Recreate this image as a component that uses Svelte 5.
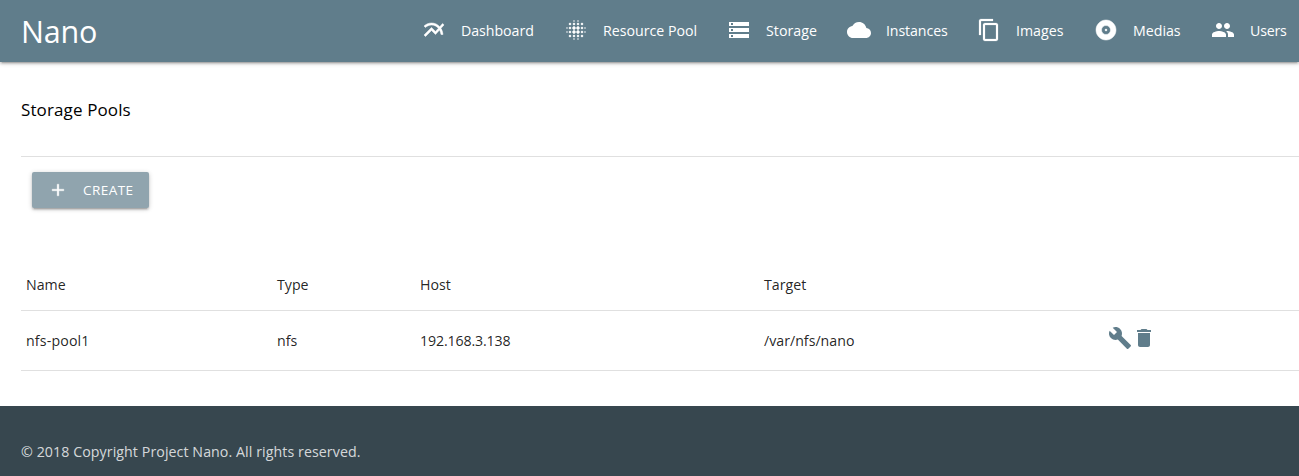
<script>
  const nav = [
    { label: 'Dashboard', ls: -0.05, weight: 0.5, path: 'M22 6.92l-1.41-1.41-2.85 3.21C15.68 6.4 12.83 5 9.61 5 6.72 5 4.07 6.16 2 8l1.42 1.42C5.12 7.93 7.27 7 9.61 7c2.74 0 5.09 1.26 6.77 3.24l-2.88 3.24-4-4L2 16.99l1.5 1.5 6-6.01 4 4 4.05-4.55c.75 1.35 1.25 2.9 1.44 4.55H21c-.22-2.3-.95-4.39-2.04-6.14L22 6.92z' },
    { label: 'Resource Pool', ls: 0, weight: 0.5, path: 'M6 13c-.55 0-1 .45-1 1s.45 1 1 1 1-.45 1-1-.45-1-1-1zm0 4c-.55 0-1 .45-1 1s.45 1 1 1 1-.45 1-1-.45-1-1-1zm0-8c-.55 0-1 .45-1 1s.45 1 1 1 1-.45 1-1-.45-1-1-1zm-3 .5c-.28 0-.5.22-.5.5s.22.5.5.5.5-.22.5-.5-.22-.5-.5-.5zM6 5c-.55 0-1 .45-1 1s.45 1 1 1 1-.45 1-1-.45-1-1-1zm15 5.5c.28 0 .5-.22.5-.5s-.22-.5-.5-.5-.5.22-.5.5.22.5.5.5zM14 7c.55 0 1-.45 1-1s-.45-1-1-1-1 .45-1 1 .45 1 1 1zm0-3.500c.28 0 .5-.22.5-.5s-.22-.5-.5-.5-.5.22-.5.5.22.5.5.5zm-11 10c-.28 0-.5.22-.5.5s.22.5.5.5.5-.22.5-.5-.22-.5-.5-.5zm7 7c-.28 0-.5.22-.5.5s.22.5.5.5.5-.22.5-.5-.22-.5-.5-.5zm0-17c.28 0 .5-.22.5-.5s-.22-.5-.5-.5-.5.22-.5.5.22.5.5.5zM10 7c.55 0 1-.45 1-1s-.45-1-1-1-1 .45-1 1 .45 1 1 1zm0 5.500c-.83 0-1.500.67-1.500 1.500s.67 1.500 1.500 1.500 1.500-.67 1.500-1.500-.67-1.500-1.500-1.500zm8 .5c-.55 0-1 .45-1 1s.45 1 1 1 1-.45 1-1-.45-1-1-1zm0 4c-.55 0-1 .45-1 1s.45 1 1 1 1-.45 1-1-.45-1-1-1zm0-8c-.55 0-1 .45-1 1s.45 1 1 1 1-.45 1-1-.45-1-1-1zm0-4c-.55 0-1 .45-1 1s.45 1 1 1 1-.45 1-1-.45-1-1-1zm3 8.500c-.28 0-.5.22-.5.5s.22.5.5.5.5-.22.5-.5-.22-.5-.5-.5zM14 17c-.55 0-1 .45-1 1s.45 1 1 1 1-.45 1-1-.45-1-1-1zm0 3.500c-.28 0-.5.22-.5.5s.22.5.5.5.5-.22.5-.5-.22-.5-.5-.5zm-4 0M10 8.500c-.83 0-1.500.67-1.500 1.500s.67 1.500 1.500 1.500 1.500-.67 1.500-1.500-.67-1.500-1.500-1.500zm0 8.500c-.55 0-1 .45-1 1s.45 1 1 1 1-.45 1-1-.45-1-1-1zm4-4.500c-.83 0-1.500.67-1.500 1.500s.67 1.500 1.500 1.500 1.500-.67 1.500-1.500-.67-1.500-1.500-1.500zm0-4c-.83 0-1.500.67-1.500 1.500s.67 1.500 1.500 1.500 1.500-.67 1.500-1.500-.67-1.500-1.500-1.500z' },
    { label: 'Storage', ls: 0.05, weight: 0, path: 'M2 20h20v-4H2v4zm2-3h2v2H4v-2zM2 4v4h20V4H2zm4 3H4V5h2v2zm-4 7h20v-4H2v4zm2-3h2v2H4v-2z' },
    { label: 'Instances', ls: -0.1, weight: 0, path: 'M19.350 10.040C18.670 6.590 15.640 4 12 4 9.110 4 6.600 5.640 5.350 8.040 2.340 8.360 0 10.910 0 14c0 3.310 2.690 6 6 6h13c2.760 0 5-2.240 5-5 0-2.640-2.050-4.780-4.650-4.960z' },
    { label: 'Images', ls: 0, weight: 0.2, path: 'M16 1H4c-1.100 0-2 .9-2 2v14h2V3h12V1zm3 4H8c-1.100 0-2 .9-2 2v14c0 1.100.9 2 2 2h11c1.100 0 2-.9 2-2V7c0-1.100-.9-2-2-2zm0 16H8V7h11v14z' },
    { label: 'Medias', ls: 0, weight: 0.5, path: 'M12 2C6.480 2 2 6.480 2 12s4.480 10 10 10 10-4.480 10-10S17.520 2 12 2zm0 14.500c-2.490 0-4.500-2.010-4.500-4.500S9.510 7.500 12 7.500s4.500 2.010 4.500 4.500-2.010 4.500-4.500 4.500zm0-5.500c-.55 0-1 .45-1 1s.45 1 1 1 1-.45 1-1-.45-1-1-1z' },
    { label: 'Users', ls: -0.2, weight: 0, path: 'M16 11c1.660 0 2.990-1.340 2.990-3S17.660 5 16 5c-1.660 0-3 1.340-3 3s1.340 3 3 3zm-8 0c1.660 0 2.990-1.340 2.990-3S9.660 5 8 5C6.340 5 5 6.340 5 8s1.340 3 3 3zm0 2c-2.330 0-7 1.170-7 3.500V19h14v-2.500c0-2.330-4.670-3.500-7-3.500zm8 0c-.29 0-.62.020-.97.050 1.160.84 1.970 1.970 1.970 3.450V19h6v-2.500c0-2.330-4.670-3.500-7-3.500z' }
  ];
  const wrench = 'M22.700 19l-9.100-9.100c.9-2.300.4-5-1.500-6.900-2-2-5-2.400-7.400-1.300L9 6 6 9 1.600 4.700C.4 7.100.9 10.100 2.900 12.100c1.900 1.900 4.600 2.400 6.900 1.500l9.100 9.100c.4.4 1 .4 1.400 0l2.300-2.300c.5-.4.5-1.100.1-1.400z';
  const trash = 'M6 19c0 1.100.9 2 2 2h8c1.100 0 2-.9 2-2V7H6v12zM19 4h-3.500l-1-1h-5l-1 1H5v2h14V4z';
  const pools = [{ name: 'nfs-pool1', type: 'nfs', host: '192.168.3.138', target: '/var/nfs/nano' }];
</script>

{#snippet icon(path, weight = 0)}
  <svg viewBox="0 0 24 24" stroke="currentColor" stroke-width={weight} aria-hidden="true"><path d={path} /></svg>
{/snippet}

<header>
  <a class="brand" href="#home">Nano</a>
  <nav>
    {#each nav as item}
      <a href="#{item.label}">{@render icon(item.path, item.weight)}<span style:letter-spacing="{item.ls}px">{item.label}</span></a>
    {/each}
  </nav>
</header>

<main>
  <h1>Storage Pools</h1>
  <div class="toolbar">
    <button>{@render icon('M19 13h-6v6h-2v-6H5v-2h6V5h2v6h6v2z', 0.4)}<span>CREATE</span></button>
  </div>
  <div class="table">
    <div class="row head">
      <span>Name</span><span>Type</span><span>Host</span><span>Target</span><span></span>
    </div>
    {#each pools as pool}
      <div class="row">
        <span class="name">{pool.name}</span><span>{pool.type}</span><span class="host">{pool.host}</span><span>{pool.target}</span>
        <span class="actions">{@render icon(wrench)}{@render icon(trash)}</span>
      </div>
    {/each}
  </div>
</main>

<footer><span>© 2018 Copyright Project Nano. All rights reserved.</span></footer>

<style>
  :global(body) { margin: 0; background: #fff; overflow: hidden; }
  :global(#app) {
    display: flex; flex-direction: column; width: 1299px; height: 476px; overflow: hidden;
    font-family: "Open Sans", "Noto Sans", sans-serif; font-size: 14.2px; color: rgba(0, 0, 0, 0.87);
  }
  svg { width: 24px; height: 24px; fill: currentColor; flex: none; display: block; }
  a { color: #fff; text-decoration: none; }
  header {
    position: relative; display: flex; height: 62px; flex: none; background: #607d8b; color: #fff;
    box-shadow: 0 2px 2px 0 rgba(0, 0, 0, .14), 0 3px 1px -2px rgba(0, 0, 0, .12), 0 1px 5px 0 rgba(0, 0, 0, .2);
  }
  .brand { width: 401px; padding-left: 21px; font-size: 30.5px; line-height: 63px; letter-spacing: -.2px; white-space: nowrap; }
  nav { display: grid; grid-template-columns: 142px 163px 120px 130px 117px 117px 88px; }
  nav a { display: flex; align-items: center; gap: 15px; height: 60px; white-space: nowrap; }
  nav span { padding-top: 1px; }
  main { flex: none; height: 344px; padding-left: 21px; box-sizing: border-box; }
  h1 { margin: 0; height: 94px; line-height: 95px; font-size: 17px; font-weight: 400; letter-spacing: .12px; color: #000; border-bottom: 1px solid #e0e0e0; }
  .toolbar { height: 102px; padding: 15px 0 0 11px; box-sizing: border-box; }
  button {
    display: flex; align-items: center; gap: 15px; width: 117px; height: 36px; padding: 0 0 0 16px; border: 0; border-radius: 2px;
    background: #90a4ae; color: #fff; font: inherit; font-size: 13.5px; letter-spacing: .45px;
    box-shadow: 0 2px 2px 0 rgba(0, 0, 0, .14), 0 3px 1px -2px rgba(0, 0, 0, .12), 0 1px 5px 0 rgba(0, 0, 0, .2);
  }
  button svg { width: 20px; height: 20px; }
  .row { display: grid; grid-template-columns: 251px 143px 344px 344px 1fr; align-items: center; height: 59px; padding-left: 5px; border-bottom: 1px solid #e0e0e0; }
  .head { height: 51px; }
  .name { letter-spacing: .15px; }
  .host { letter-spacing: -.14px; }
  .actions { display: flex; padding-bottom: 5px; color: #607d8b; }
  footer { flex: 1; padding: 35px 0 0 21px; background: #37474f; color: rgba(255, 255, 255, .8); line-height: 21px; letter-spacing: .08px; }
</style>
